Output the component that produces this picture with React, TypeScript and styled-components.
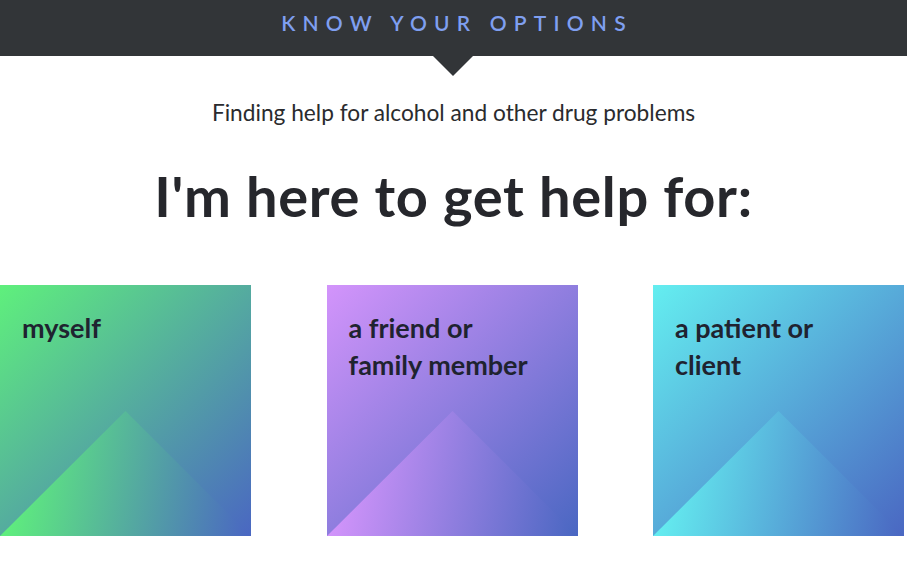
import React from 'react'
import styled, { createGlobalStyle } from 'styled-components'

const GlobalStyle = createGlobalStyle`
  html, body {
    margin: 0;
    padding: 0;
    background: #ffffff;
  }
  body {
    font-family: Lato, "Open Sans", sans-serif;
    color: #26272b;
  }
`

type Option = {
  id: string
  lines: string[]
  from: string
  to: string
}

const options: Option[] = [
  { id: 'self', lines: ['myself'], from: '#5ff07c', to: '#4a67c2' },
  { id: 'friend', lines: ['a friend or', 'family member'], from: '#d394fb', to: '#4a67c2' },
  { id: 'client', lines: ['a patient or', 'client'], from: '#64eef0', to: '#4a67c2' },
]

const Card = ({ option }: { option: Option }) => {
  const gid = `peak-${option.id}`
  return (
    <Tile from={option.from} to={option.to}>
      <TileLabel>
        {option.lines.map((l) => (
          <span key={l}>{l}</span>
        ))}
      </TileLabel>
      <Peak viewBox="0 0 250 125" preserveAspectRatio="none">
        <defs>
          <linearGradient id={gid} x1="0" y1="0.8" x2="1" y2="0.9">
            <stop offset="0.02" stopColor={option.from} />
            <stop offset="1" stopColor={option.to} />
          </linearGradient>
        </defs>
        <polygon points="0,125 125,0 250,125" fill={`url(#${gid})`} />
      </Peak>
    </Tile>
  )
}

const App = () => {
  return (
    <Page>
      <GlobalStyle />
      <Banner>
        <BannerTitle>Know your options</BannerTitle>
      </Banner>
      <Intro>Finding help for alcohol and other drug problems</Intro>
      <Heading>I'm here to get help for:</Heading>
      <Grid>
        {options.map((o) => (
          <Card key={o.id} option={o} />
        ))}
      </Grid>
    </Page>
  )
}

export default App

const Page = styled.div`
  width: 907px;
  min-height: 581px;
  overflow: hidden;
`
const Banner = styled.header`
  position: relative;
  height: 56px;
  background: #323538;
  display: flex;
  align-items: center;
  justify-content: center;

  &::after {
    content: '';
    position: absolute;
    left: 433px;
    top: 56px;
    border-left: 20px solid transparent;
    border-right: 20px solid transparent;
    border-top: 20px solid #323538;
  }
`
const BannerTitle = styled.h1`
  margin: 0 0 11px 0;
  padding-left: 7px;
  font-family: Lato, sans-serif;
  font-size: 21px;
  font-weight: 600;
  letter-spacing: 7.2px;
  text-transform: uppercase;
  color: #7f9ff0;
`
const Intro = styled.p`
  margin: 43px 0 0;
  text-align: center;
  font-size: 22.7px;
  line-height: 28px;
  color: #2a2b2e;
`
const Heading = styled.h2`
  margin: 34px 0 0;
  text-align: center;
  font-size: 56px;
  line-height: 70px;
  font-weight: 700;
  letter-spacing: 0.7px;
  color: #26272c;
`
const Grid = styled.div`
  display: grid;
  grid-template-columns: repeat(3, 251px);
  column-gap: 75.5px;
  margin-top: 54px;
`
const Tile = styled.div<{ from: string; to: string }>`
  position: relative;
  height: 251px;
  background: linear-gradient(135deg, ${(p) => p.from} 0%, ${(p) => p.to} 100%);
  overflow: hidden;
`
const TileLabel = styled.div`
  display: flex;
  flex-direction: column;
  padding: 24px 22px 0;
  font-size: 27px;
  line-height: 37px;
  font-weight: 700;
  color: #1f2330;
`
const Peak = styled.svg`
  position: absolute;
  left: 0;
  bottom: 0;
  width: 100%;
  height: 125px;
  display: block;
`
